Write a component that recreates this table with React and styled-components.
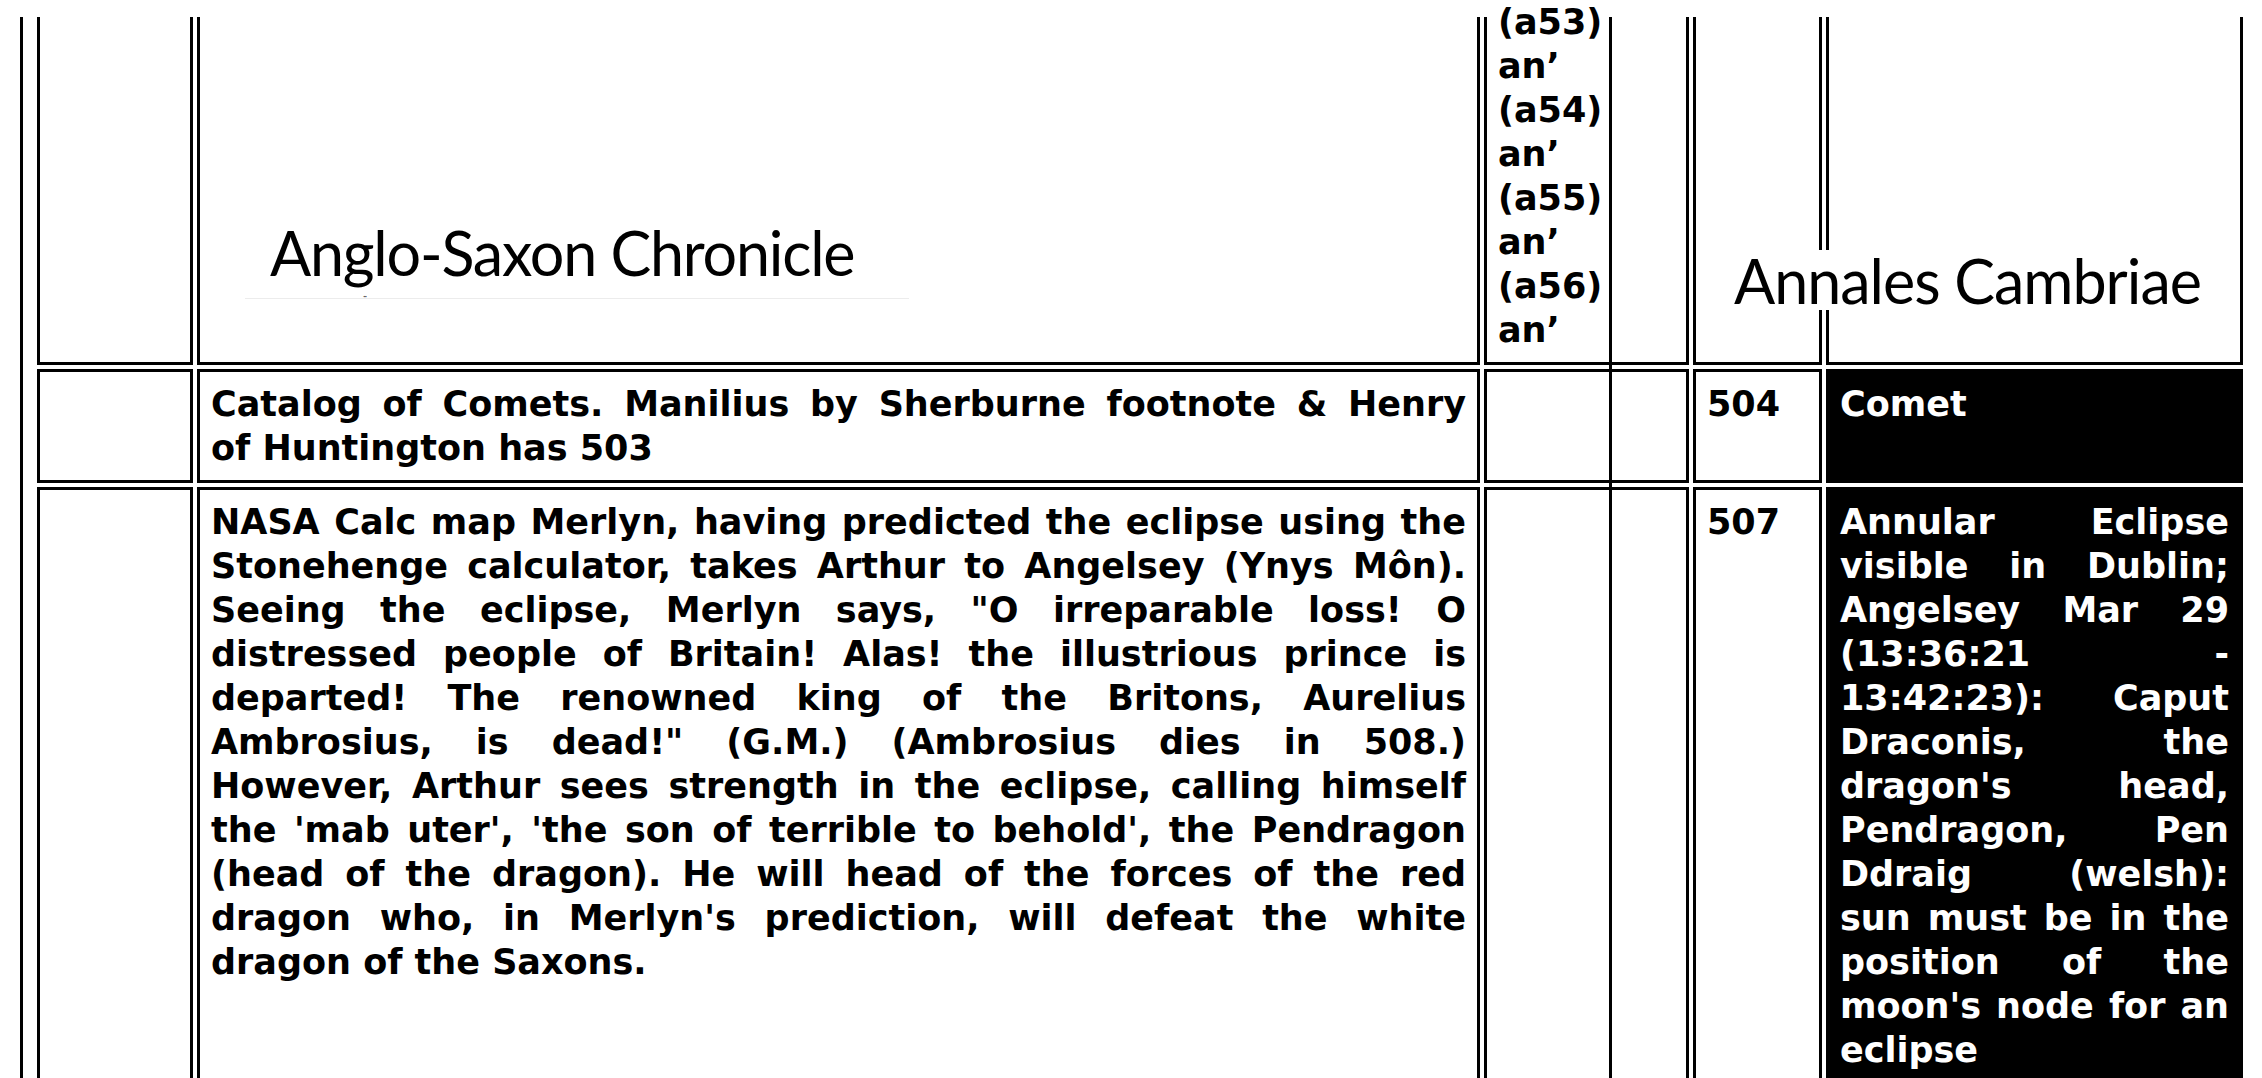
import React from "react";
import styled, { createGlobalStyle } from "styled-components";

const GlobalStyle = createGlobalStyle`
  html, body {
    margin: 0;
    padding: 0;
    background: #fff;
    overflow: hidden;
  }
  body {
    font-family: "DejaVu Sans", Verdana, sans-serif;
    color: #000;
  }
  * {
    box-sizing: border-box;
  }
`;

const Page = styled.div`
  position: relative;
  height: 1078px;
  overflow: hidden;
`;

const TopMask = styled.div`
  position: absolute;
  top: 0;
  left: 0;
  right: 0;
  height: 17px;
  background: #fff;
  z-index: 1;
`;

const Frame = styled.div`
  position: relative;
  margin: -105px 0 0 20px;
  padding-left: 10px;
  border-left: 3px solid #000;
`;

const Divider = styled.div`
  position: absolute;
  top: 0;
  bottom: 0;
  left: 1586px;
  width: 3px;
  background: #000;
`;

const Table = styled.table`
  border-collapse: separate;
  border-spacing: 4px;
  table-layout: fixed;
  width: 2214px;
  font-family: "DejaVu Sans", Verdana, sans-serif;
  font-weight: bold;
  font-size: 35px;
  line-height: 44px;
`;

const Col = styled.col`
  width: ${(p) => p.$w}px;
`;

const Cell = styled.td`
  position: relative;
  border: 3px solid #000;
  padding: 10px 11px;
  vertical-align: ${(p) => p.$align || "top"};
  background: ${(p) => (p.$dark ? "#000" : "#fff")};
  color: ${(p) => (p.$dark ? "#fff" : "#000")};
`;

const Line = styled.span`
  display: block;
  white-space: nowrap;
  text-align: justify;
  text-align-last: ${(p) => (p.$last ? "left" : "justify")};
`;

const Stack = styled.div`
  position: relative;
  z-index: 2;
  padding-top: 88px;
`;

const ChronicleImage = styled.div`
  position: relative;
  width: 664px;
  height: 84px;
  margin: 0 0 53px 34px;
  padding: 2px 0 0 25px;
  border-bottom: 1px solid #ececec;
  font-family: Lato, "Open Sans", sans-serif;
  font-weight: 400;
  font-size: 61px;
  letter-spacing: -1.2px;
  line-height: 72px;
  color: #000;

  &::after {
    content: "··";
    position: absolute;
    left: 118px;
    bottom: -2px;
    font-size: 10px;
    line-height: 10px;
    color: #555;
  }
`;

const AnnalesImage = styled.div`
  position: absolute;
  left: -99px;
  bottom: 52px;
  width: 480px;
  height: 60px;
  padding-left: 4px;
  background: #fff;
  font-family: Lato, "Open Sans", sans-serif;
  font-weight: 400;
  font-size: 61px;
  letter-spacing: -1px;
  line-height: 62px;
  color: #000;
`;

const Paragraph = ({ lines }) => (
  <>
    {lines.map((text, i) => (
      <Line key={i} $last={i === lines.length - 1}>
        {text}
      </Line>
    ))}
  </>
);

const annals = ["(a53)", "an’", "(a54)", "an’", "(a55)", "an’", "(a56)", "an’"];

const comets = [
  "Catalog of Comets. Manilius by Sherburne footnote & Henry",
  "of Huntington has 503",
];

const merlyn = [
  "NASA Calc map Merlyn, having predicted the eclipse using the",
  "Stonehenge calculator, takes Arthur to Angelsey (Ynys Môn).",
  'Seeing the eclipse, Merlyn says, "O irreparable loss! O',
  "distressed people of Britain! Alas! the illustrious prince is",
  "departed! The renowned king of the Britons, Aurelius",
  'Ambrosius, is dead!" (G.M.) (Ambrosius dies in 508.)',
  "However, Arthur sees strength in the eclipse, calling himself",
  "the 'mab uter', 'the son of terrible to behold', the Pendragon",
  "(head of the dragon). He will head of the forces of the red",
  "dragon who, in Merlyn's prediction, will defeat the white",
  "dragon of the Saxons.",
];

const eclipse = [
  "Annular Eclipse",
  "visible in Dublin;",
  "Angelsey Mar 29",
  "(13:36:21 -",
  "13:42:23): Caput",
  "Draconis, the",
  "dragon's head,",
  "Pendragon, Pen",
  "Ddraig (welsh):",
  "sun must be in the",
  "position of the",
  "moon's node for an",
  "eclipse",
];

export default function App() {
  return (
    <Page>
      <GlobalStyle />
      <TopMask />
      <Frame>
        <Table>
          <colgroup>
            <Col $w={156} />
            <Col $w={1283} />
            <Col $w={205} />
            <Col $w={129} />
            <Col $w={417} />
          </colgroup>
          <tbody>
            <tr>
              <Cell />
              <Cell $align="bottom">
                <ChronicleImage>Anglo-Saxon Chronicle</ChronicleImage>
              </Cell>
              <Cell>
                <Stack>
                  {annals.map((a, i) => (
                    <Line key={i} $last>
                      {a}
                    </Line>
                  ))}
                </Stack>
              </Cell>
              <Cell />
              <Cell>
                <AnnalesImage>Annales Cambriae</AnnalesImage>
              </Cell>
            </tr>
            <tr>
              <Cell />
              <Cell>
                <Paragraph lines={comets} />
              </Cell>
              <Cell />
              <Cell>504</Cell>
              <Cell $dark>Comet</Cell>
            </tr>
            <tr>
              <Cell />
              <Cell>
                <Paragraph lines={merlyn} />
              </Cell>
              <Cell />
              <Cell>507</Cell>
              <Cell $dark>
                <Paragraph lines={eclipse} />
              </Cell>
            </tr>
          </tbody>
        </Table>
        <Divider />
      </Frame>
    </Page>
  );
}
